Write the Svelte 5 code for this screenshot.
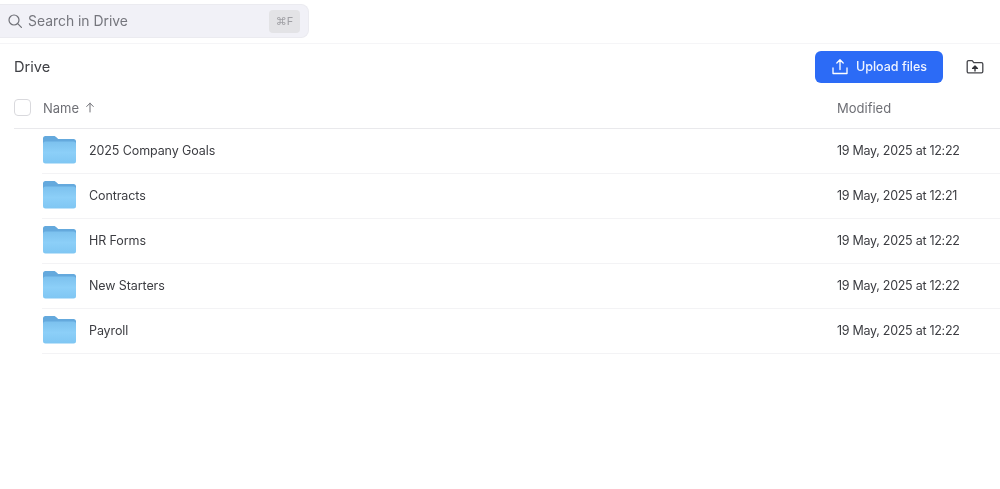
<script>
  const rows = [
    { name: '2025 Company Goals', modified: '19 May, 2025 at 12:22' },
    { name: 'Contracts', modified: '19 May, 2025 at 12:21' },
    { name: 'HR Forms', modified: '19 May, 2025 at 12:22' },
    { name: 'New Starters', modified: '19 May, 2025 at 12:22' },
    { name: 'Payroll', modified: '19 May, 2025 at 12:22' }
  ];
</script>

<div class="page">
  <div class="topbar">
    <div class="search">
      <svg class="search__icon" width="16" height="16" viewBox="0 0 16 16" fill="none" stroke="#6f7077" stroke-width="1.2">
        <circle cx="7" cy="7" r="5" />
        <path d="M10.7 10.7 14.4 14.4" stroke-linecap="round" />
      </svg>
      <span class="search__text">Search in Drive</span>
      <span class="search__key">⌘F</span>
    </div>
  </div>

  <div class="head">
    <div class="head__title">Drive</div>
    <button class="upload" type="button">
      <svg width="18" height="18" viewBox="0 0 18 18" fill="none" stroke="#fff" stroke-width="1.300" stroke-linecap="round" stroke-linejoin="round">
        <path d="M9 11.500V2M5.800 5 9 1.800 12.200 5" />
        <path d="M2 10v5.500h14V10" />
      </svg>
      Upload files
    </button>
    <svg class="newfolder" width="18" height="16" viewBox="0 0 18 16" fill="none">
      <path d="M1.200 3a1.300 1.300 0 0 1 1.300-1.300h3.700l1.600 2h7.700a1.300 1.300 0 0 1 1.300 1.300v7.600a1.300 1.300 0 0 1-1.300 1.300h-13a1.300 1.300 0 0 1-1.300-1.300z" stroke="#44454a" stroke-width="1.300" stroke-linejoin="round" />
      <path d="M9 12.500V8.200M6.600 9.400 9 6.900l2.400 2.500z" stroke="#33343a" stroke-width="1.400" fill="#33343a" stroke-linejoin="round" />
    </svg>
  </div>

  <div class="columns">
    <span class="checkbox"></span>
    <span class="columns__name">Name
      <svg class="arrow" width="10" height="11" viewBox="0 0 10 11" fill="none" stroke="#6e6f75" stroke-width="1" stroke-linecap="round" stroke-linejoin="round">
        <path d="M5 10V1.200M1.700 4.500 5 1.200l3.300 3.300" />
      </svg>
    </span>
    <span class="columns__modified">Modified</span>
  </div>

  <ul class="list">
    {#each rows as row}
      <li class="row">
        <svg class="folder" width="35" height="30" viewBox="0 0 35 30">
          <defs>
            <linearGradient id="folder-body" x1="0" y1="0" x2="0" y2="1">
              <stop offset="0" stop-color="#7cc1ee" />
              <stop offset="0.5" stop-color="#8ccff8" />
              <stop offset="1" stop-color="#7fc6f3" />
            </linearGradient>
          </defs>
          <path d="M1 3.500A2.500 2.500 0 0 1 3.500 1h8.300c1 0 1.600.4 2.300 1.100L16.200 4H31.500A2.500 2.500 0 0 1 34 6.500V12H1z" fill="#64a9dd" />
          <rect x="1" y="6.500" width="33" height="22" rx="2.500" fill="url(#folder-body)" />
        </svg>
        <span class="row__name">{row.name}</span>
        <span class="row__modified">{row.modified}</span>
      </li>
    {/each}
  </ul>
</div>

<style>
  :global(body) {
    background: #fff;
  }

  .page {
    width: 1000px;
    height: 489px;
    overflow: hidden;
    font-family: Inter, "Noto Sans", sans-serif;
    color: #3a3b40;
    filter: blur(0.35px);
  }

  .topbar {
    height: 44px;
    box-sizing: border-box;
    padding-top: 4px;
    border-bottom: 1px solid #f5f5f7;
  }

  .search {
    width: 309px;
    height: 34px;
    box-sizing: border-box;
    display: flex;
    align-items: center;
    padding: 0 8px 0 7px;
    background: #f1f1f7;
    border: 1px solid #ebebf0;
    border-left: none;
    border-radius: 0 8px 8px 0;
  }

  .search__text {
    margin-left: 5px;
    flex: 1;
    font-size: 13.9px;
    color: #75767d;
  }

  .search__key {
    width: 31px;
    height: 23px;
    border-radius: 4px;
    background: #e3e3e6;
    color: #a0a0a5;
    font-size: 11px;
    display: flex;
    align-items: center;
    justify-content: center;
  }

  .head {
    height: 45px;
    display: flex;
    align-items: center;
    padding: 0 16px 0 14px;
    box-sizing: border-box;
  }

  .head__title {
    flex: 1;
    font-size: 14.6px;
    color: #3f4045;
  }

  .upload {
    width: 128px;
    height: 32px;
    display: flex;
    align-items: center;
    justify-content: center;
    gap: 7px;
    border: none;
    border-radius: 6px;
    background: #2c6bf6;
    color: #eef3ff;
    font-family: inherit;
    font-size: 12.5px;
    font-weight: 500;
    padding: 0;
  }

  .newfolder {
    margin-left: 23px;
  }

  .columns {
    margin-left: 14px;
    height: 40px;
    box-sizing: border-box;
    padding-bottom: 2px;
    display: flex;
    align-items: center;
    border-bottom: 1px solid #e9e9ec;
    font-size: 13px;
    color: #6e6f75;
  }

  .checkbox {
    width: 15px;
    height: 15px;
    border: 1px solid #d9d9dd;
    border-radius: 4px;
  }

  .columns__name {
    margin-left: 12px;
    flex: 1;
  }

  .arrow {
    margin-left: 2px;
  }

  .columns__modified {
    width: 163px;
  }

  .list {
    list-style: none;
    margin: 0;
    padding: 0;
  }

  .row {
    margin-left: 42px;
    height: 45px;
    box-sizing: border-box;
    padding-bottom: 2px;
    display: flex;
    align-items: center;
    border-bottom: 1px solid #f3f3f5;
    font-size: 12.5px;
    color: #3c3d42;
  }

  .folder {
    margin-right: 12px;
    flex: none;
  }

  .row__name {
    flex: 1;
    letter-spacing: -0.1px;
  }

  .row__modified {
    width: 163px;
    letter-spacing: -0.28px;
  }
</style>
